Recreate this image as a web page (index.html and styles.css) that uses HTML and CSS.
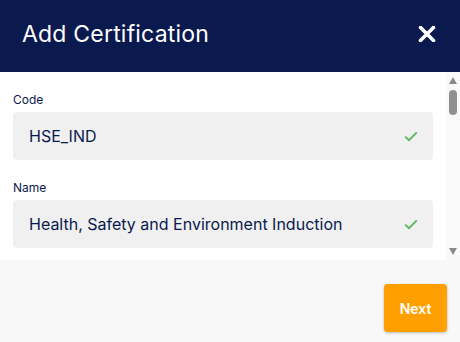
FILE: index.html
```html
<!DOCTYPE html>
<html lang="en">
<head>
  <meta charset="UTF-8">
  <meta name="viewport" content="width=device-width, initial-scale=1.0">
  <title>Add Certification</title>
  <link rel="stylesheet" href="styles.css">
</head>
<body>

  <!-- Finestra di dialogo -->
  <div class="dialog">

    <!-- Intestazione -->
    <header class="dialog-header">
      <h1 class="dialog-title">Add Certification</h1>
      <button class="close-btn" aria-label="Close">
        <svg width="18" height="16" viewBox="0 0 18 16">
          <path d="M2.5 1.5 L15.5 14.5 M15.5 1.5 L2.5 14.5" stroke="#fff" stroke-width="3.6" stroke-linecap="round"/>
        </svg>
      </button>
    </header>

    <!-- Corpo con i campi e la barra di scorrimento -->
    <div class="dialog-body">
      <div class="form-area">
        <div class="field">
          <label class="field-label" for="code">Code</label>
          <div class="field-box">
            <input class="field-input" id="code" type="text" value="HSE_IND">
            <svg class="check" width="14" height="11" viewBox="0 0 14 11">
              <path d="M1.2 5.6 L5 9.2 L12.8 1.4" fill="none" stroke="#5cb85c" stroke-width="1.9"/>
            </svg>
          </div>
        </div>

        <div class="field">
          <label class="field-label" for="name">Name</label>
          <div class="field-box">
            <input class="field-input" id="name" type="text" value="Health, Safety and Environment Induction">
            <svg class="check" width="14" height="11" viewBox="0 0 14 11">
              <path d="M1.2 5.6 L5 9.2 L12.8 1.4" fill="none" stroke="#5cb85c" stroke-width="1.9"/>
            </svg>
          </div>
        </div>
      </div>

      <!-- Barra di scorrimento -->
      <div class="scrollbar">
        <span class="scroll-up"></span>
        <span class="scroll-thumb"></span>
        <span class="scroll-space"></span>
        <span class="scroll-down"></span>
      </div>
    </div>

    <!-- Piè di pagina con il bottone -->
    <footer class="dialog-footer">
      <button class="next-btn">Next</button>
    </footer>

  </div>

</body>
</html>
```

FILE: styles.css
```css
/* Base della pagina */
body {
  margin: 0;
  font-family: Inter, 'Noto Sans', sans-serif;
  color: #0a1a4e;
  background-color: #fff;
}

/* Contenitore del dialogo */
.dialog {
  width: 460px;
  height: 342px;
  display: flex;
  flex-direction: column;
}

/* Intestazione blu scuro */
.dialog-header {
  height: 72px;
  flex: none;
  background-color: #0a1a4e;
  display: flex;
  align-items: center;
  justify-content: space-between;
  padding: 0 24px 4px 22px;
  box-sizing: border-box;
}

.dialog-title {
  margin: 0;
  font-size: 23px;
  font-weight: 400;
  color: #fff;
  letter-spacing: 0.2px;
}

.close-btn {
  border: none;
  background: none;
  padding: 0;
  width: 18px;
  height: 16px;
  display: flex;
  cursor: pointer;
}

/* Corpo: campi a sinistra, barra a destra */
.dialog-body {
  flex: 1;
  display: flex;
  min-height: 0;
  background-color: #fff;
}

.form-area {
  flex: 1;
  overflow: hidden;
  padding: 20px 13px 0 13px;
}

/* Barra di scorrimento disegnata */
.scrollbar {
  width: 14px;
  flex: none;
  display: flex;
  flex-direction: column;
  align-items: center;
  padding: 5px 0 5px 0;
  box-sizing: border-box;
  background-color: #f9f9f9;
}

.scroll-up {
  width: 0;
  height: 0;
  border-left: 4px solid transparent;
  border-right: 4px solid transparent;
  border-bottom: 7px solid #8a8a8a;
}

.scroll-thumb {
  width: 8px;
  height: 25px;
  margin-top: 6px;
  border-radius: 4px;
  background-color: #8f8f8f;
}

.scroll-space {
  flex: 1;
}

.scroll-down {
  width: 0;
  height: 0;
  border-left: 4px solid transparent;
  border-right: 4px solid transparent;
  border-top: 7px solid #8a8a8a;
}

.field {
  margin-bottom: 20px;
}

.field-label {
  display: block;
  font-size: 12px;
  line-height: 16px;
  margin-bottom: 4px;
  color: #0a1a4e;
}

.field-box {
  height: 48px;
  background-color: #f0f0f0;
  border-radius: 4px;
  display: flex;
  align-items: center;
  padding: 0 15px 0 16px;
}

.field-input {
  flex: 1;
  min-width: 0;
  border: none;
  background: none;
  outline: none;
  padding: 0;
  font-family: inherit;
  font-size: 16px;
  color: #0a1a4e;
}

.check {
  flex: none;
}

/* Piè di pagina grigio chiaro */
.dialog-footer {
  height: 82px;
  flex: none;
  background-color: #f8f8f8;
  display: flex;
  justify-content: flex-end;
  align-items: flex-start;
  padding: 24px 13px 0 0;
  box-sizing: border-box;
}

.next-btn {
  width: 63px;
  height: 48px;
  border: none;
  border-radius: 4px;
  background-color: #ffa000;
  color: #fff;
  font-family: inherit;
  font-size: 14px;
  font-weight: 600;
  box-shadow: 0 1px 3px rgba(0, 0, 0, 0.25);
  cursor: pointer;
}
```
